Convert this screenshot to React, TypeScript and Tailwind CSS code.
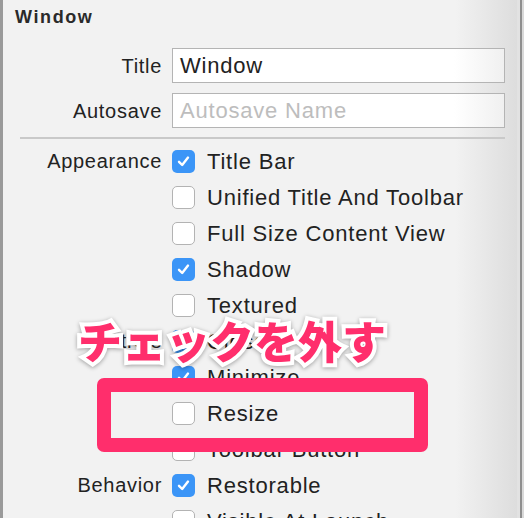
const font = "font-['Helvetica_Neue','Liberation_Sans',Arial,sans-serif]";

function Check({ on }: { on: boolean }) {
  if (on) {
    return (
      <div className="w-[23px] h-[23px] rounded-[5px] bg-[#3b95f7] flex items-center justify-center shrink-0">
        <svg width="15" height="15" viewBox="0 0 15 15">
          <path d="M3 7.8 L6.2 11 L12 3.6" fill="none" stroke="white" strokeWidth="2.4" strokeLinecap="round" strokeLinejoin="round" />
        </svg>
      </div>
    );
  }
  return <div className="w-[23px] h-[23px] rounded-[5px] bg-white border border-[#b3b3b3] shrink-0" />;
}

const rows: { label?: string; text: string; on: boolean }[] = [
  { label: "Appearance", text: "Title Bar", on: true },
  { text: "Unified Title And Toolbar", on: false },
  { text: "Full Size Content View", on: false },
  { text: "Shadow", on: true },
  { text: "Textured", on: false },
  { label: "Controls", text: "Close", on: true },
  { text: "Minimize", on: true },
  { text: "Resize", on: false },
  { text: "Toolbar Button", on: false },
  { label: "Behavior", text: "Restorable", on: true },
  { text: "Visible At Launch", on: false },
];

export default function App() {
  return (
    <div className={`w-[524px] h-[518px] relative overflow-hidden flex bg-[#f2f2f2] text-[#222] ${font}`}>
      <div className="w-[3px] bg-[#9a9a9a] shrink-0" />
      <div className="w-[514px] shrink-0 bg-[linear-gradient(to_right,#f2f2f2_88%,#dddddd)] pt-[5px]">
        <div className="h-[24px] pl-[12px] text-[18px] leading-[24px] font-bold tracking-[1.6px] text-[#2a2a2a]">Window</div>
        <div className="mt-[19px] flex items-center">
          <div className="w-[159px] text-right text-[20px] tracking-[0.7px]">Title</div>
          <div className="ml-[10px] w-[333px] h-[35px] bg-[linear-gradient(to_right,#ffffff_85%,#f0f0f0)] border border-[#b4b4b4] flex items-center pl-[7px] text-[22px] tracking-[0.8px]">
            Window
          </div>
        </div>
        <div className="mt-[10px] flex items-center">
          <div className="w-[159px] text-right text-[20px] tracking-[0.7px]">Autosave</div>
          <div className="ml-[10px] w-[333px] h-[35px] bg-[linear-gradient(to_right,#ffffff_85%,#f0f0f0)] border border-[#b4b4b4] flex items-center pl-[7px] text-[22px] tracking-[0.8px] text-[#bdbdbd]">
            Autosave Name
          </div>
        </div>
        <div className="mt-[9px] ml-[17px] w-[485px] h-[2px] bg-[#c9c9c9]" />
        <div className="mt-[4px] flex flex-col">
          {rows.map((r) => (
            <div key={r.text} className="h-[36px] flex items-center">
              <div className="w-[159px] text-right text-[20px] tracking-[0.7px]">{r.label ?? ""}</div>
              <div className="ml-[10px]">
                <Check on={r.on} />
              </div>
              <div className="ml-[12px] text-[22px] tracking-[0.8px] whitespace-nowrap">{r.text}</div>
            </div>
          ))}
        </div>
      </div>
      <div className="flex-1 flex">
        <div className="w-[3px] bg-[#e2e2e2]" />
        <div className="w-[2px] bg-[#8f8f8f]" />
        <div className="flex-1 bg-[#d9d9d9]" />
      </div>

      <div className="absolute left-[78px] top-[317px] text-[44px] leading-[46px] font-black text-[#ff2e6c] font-['Noto_Sans_CJK_JP',sans-serif] [-webkit-text-stroke:8px_white] [paint-order:stroke_fill] drop-shadow-[0_1px_2px_rgba(0,0,0,0.35)] whitespace-nowrap">
        チェックを外す
      </div>
      <div className="absolute left-[97px] top-[378px] w-[331px] h-[74px] border-[14px] border-[#ff2e6c] rounded-[7px]" />
    </div>
  );
}
